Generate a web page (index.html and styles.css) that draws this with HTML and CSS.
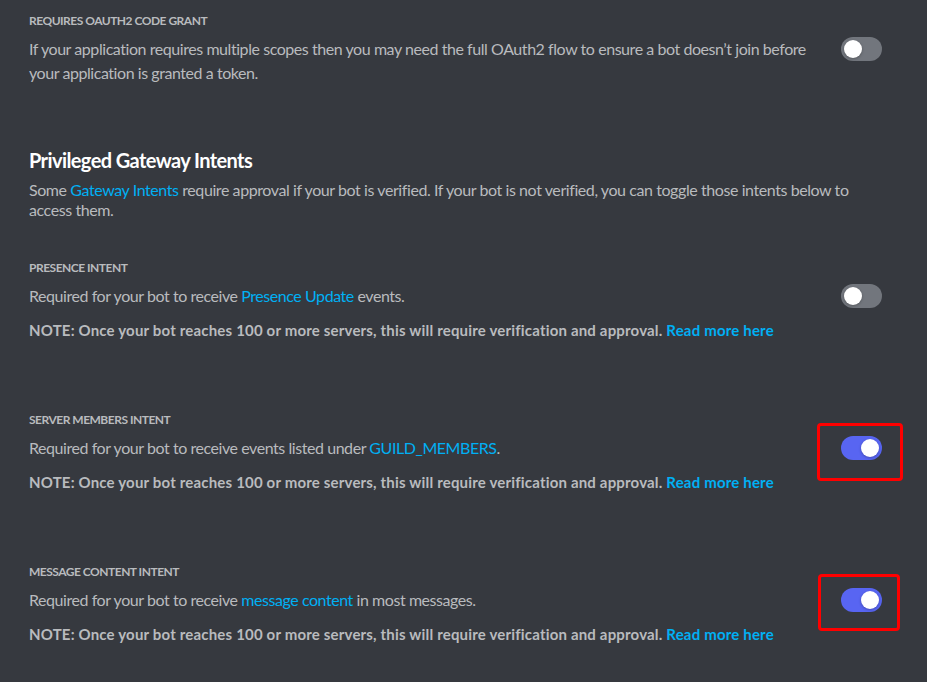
FILE: index.html
```html
<!DOCTYPE html>
<html lang="en">
<head>
<meta charset="utf-8">
<title>Bot settings</title>
<link rel="stylesheet" href="styles.css">
</head>
<body>
<main class="page">
  <section class="setting setting-first">
    <h3 class="label">Requires OAuth2 Code Grant</h3>
    <div class="row">
      <p class="desc">If your application requires multiple scopes then you may need the full OAuth2 flow to ensure a bot doesn’t join before your application is granted a token.</p>
      <span class="toggle"><span class="knob"></span></span>
    </div>
  </section>

  <section class="intro">
    <h2 class="heading">Privileged Gateway Intents</h2>
    <p class="intro-text"><span>Some</span> <a class="link" href="#">Gateway Intents</a> <span>require approval if your bot is verified. If your bot is not verified, you can toggle those intents below to</span> <span>access them.</span></p>
  </section>

  <section class="setting">
    <h3 class="label">Presence Intent</h3>
    <div class="row">
      <p class="desc">Required for your bot to receive <a class="link" href="#">Presence Update</a> events.</p>
      <span class="toggle"><span class="knob"></span></span>
    </div>
    <p class="note">NOTE: Once your bot reaches 100 or more servers, this will require verification and approval. <a class="link" href="#">Read more here</a></p>
  </section>

  <section class="setting">
    <h3 class="label">Server Members Intent</h3>
    <div class="row">
      <p class="desc">Required for your bot to receive events listed under <a class="link" href="#">GUILD_MEMBERS</a>.</p>
      <span class="toggle toggle-on"><span class="knob"></span><span class="highlight"></span></span>
    </div>
    <p class="note">NOTE: Once your bot reaches 100 or more servers, this will require verification and approval. <a class="link" href="#">Read more here</a></p>
  </section>

  <section class="setting">
    <h3 class="label">Message Content Intent</h3>
    <div class="row">
      <p class="desc">Required for your bot to receive <a class="link" href="#">message content</a> in most messages.</p>
      <span class="toggle toggle-on"><span class="knob"></span><span class="highlight highlight-b"></span></span>
    </div>
    <p class="note">NOTE: Once your bot reaches 100 or more servers, this will require verification and approval. <a class="link" href="#">Read more here</a></p>
  </section>
</main>
</body>
</html>
```

FILE: styles.css
```css
* { box-sizing: border-box; }
html, body {
  margin: 0;
  padding: 0;
  background: #36393f;
}
body {
  font-family: Lato, "Open Sans", "Liberation Sans", sans-serif;
  color: #b9bbbe;
  height: 682px;
  overflow: hidden;
}
.page {
  padding: 13px 45px 0 29px;
}
p, h2, h3 { margin: 0; }
.label {
  font-size: 12px;
  line-height: 16px;
  font-weight: 700;
  text-transform: uppercase;
  color: #b9bbbe;
  letter-spacing: -0.5px;
}
.row {
  display: flex;
  align-items: flex-start;
  margin-top: 8px;
}
.desc {
  flex: 1;
  font-size: 16px;
  line-height: 24px;
  letter-spacing: -0.44px;
  padding-right: 20px;
}
.toggle {
  position: relative;
  flex: none;
  width: 41px;
  height: 24px;
  border-radius: 12px;
  background: #72767d;
}
.knob {
  position: absolute;
  top: 3px;
  left: 3px;
  width: 18px;
  height: 18px;
  border-radius: 50%;
  background: #fff;
  box-shadow: 0 1px 3px rgba(0,0,0,0.25);
}
.toggle-on { background: #5865f2; }
.toggle-on .knob { left: auto; right: 3px; }
.highlight {
  position: absolute;
  left: -24px;
  top: -13px;
  width: 86px;
  height: 58px;
  border: 3px solid #ff0000;
  border-radius: 4px;
}
.highlight-b {
  left: -23px;
  top: -14px;
  width: 82px;
  height: 57px;
}
.intro { margin-top: 63px; }
.heading {
  font-size: 20px;
  line-height: 24px;
  font-weight: 700;
  letter-spacing: -0.6px;
  color: #ffffff;
}
.intro-text {
  margin-top: 8px;
  font-size: 16px;
  line-height: 20px;
  letter-spacing: -0.42px;
}
.link {
  color: #00b0f4;
  text-decoration: none;
}
.setting { margin-top: 40px; }
.setting-first { margin-top: 0; }
.setting + .setting { margin-top: 72px; }
.note {
  margin-top: 12px;
  font-size: 15px;
  line-height: 20px;
  font-weight: 700;
  letter-spacing: 0.18px;
}
.note .link { font-weight: 700; }
```
